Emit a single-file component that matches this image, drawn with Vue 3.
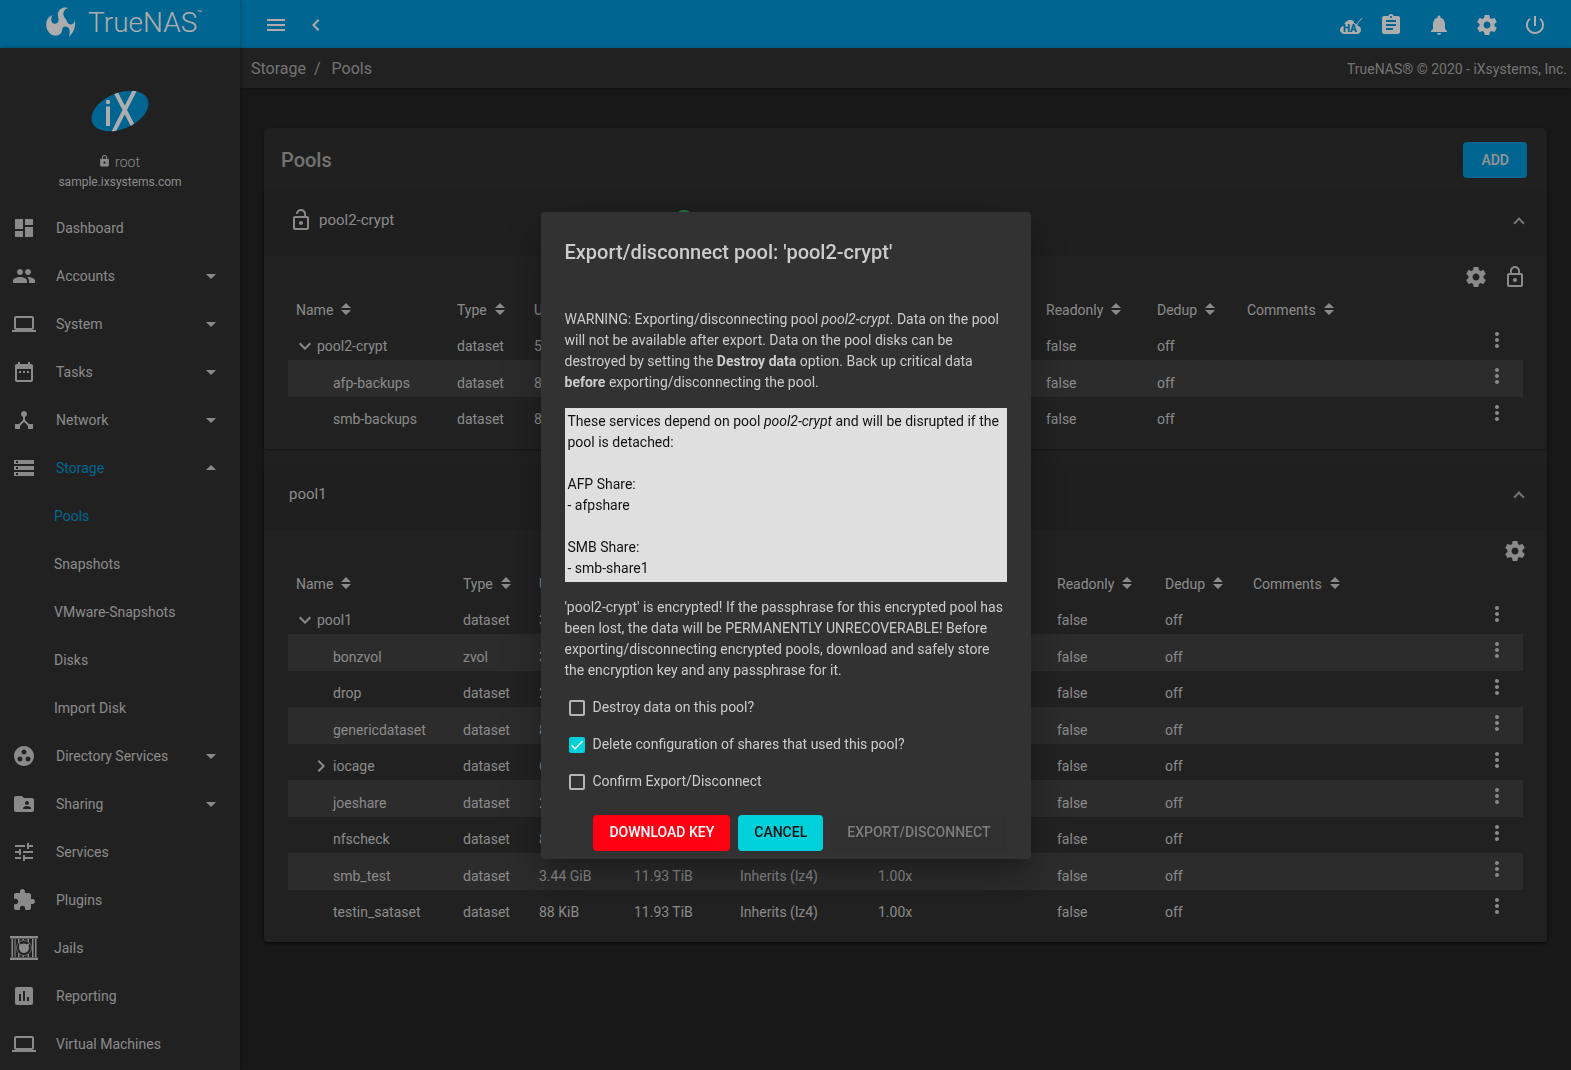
<script setup>
import { ref } from 'vue'

const icons = {
  dashboard: 'M3 13h8V3H3v10zm0 8h8v-6H3v6zm10 0h8V11h-8v10zm0-18v6h8V3h-8z',
  people: 'M16 11c1.66 0 2.99-1.34 2.99-3S17.66 5 16 5c-1.66 0-3 1.34-3 3s1.34 3 3 3zm-8 0c1.66 0 2.99-1.34 2.99-3S9.66 5 8 5C6.34 5 5 6.34 5 8s1.34 3 3 3zm0 2c-2.33 0-7 1.17-7 3.5V19h14v-2.5c0-2.33-4.67-3.5-7-3.5zm8 0c-.29 0-.62.02-.97.05 1.16.84 1.97 1.97 1.97 3.45V19h6v-2.5c0-2.33-4.67-3.5-7-3.5z',
  laptop: 'M20 18c1.1 0 1.99-.9 1.99-2L22 6c0-1.1-.9-2-2-2H4c-1.1 0-2 .9-2 2v10c0 1.1.9 2 2 2H0v2h24v-2h-4zM4 6h16v10H4V6z',
  calendar: 'M9 11H7v2h2v-2zm4 0h-2v2h2v-2zm4 0h-2v2h2v-2zm2-7h-1V2h-2v2H8V2H6v2H5c-1.11 0-1.99.9-1.99 2L3 20c0 1.1.89 2 2 2h14c1.1 0 2-.9 2-2V6c0-1.1-.9-2-2-2zm0 16H5V9h14v11z',
  hub: 'M17 16l-4-4V8.82C14.16 8.4 15 7.3 15 6c0-1.66-1.34-3-3-3S9 4.34 9 6c0 1.3.84 2.4 2 2.82V12l-4 4H3v5h5v-3.05l4-4.2 4 4.2V21h5v-5h-4z',
  storage: 'M2 20h20v-4H2v4zm2-3h2v2H4v-2zM2 4v4h20V4H2zm4 3H4V5h2v2zm-4 7h20v-4H2v4zm2-3h2v2H4v-2z',
  groupWork: 'M12 2C6.48 2 2 6.48 2 12s4.48 10 10 10 10-4.48 10-10S17.52 2 12 2zM8 17.5c-1.38 0-2.5-1.12-2.5-2.5s1.12-2.5 2.5-2.5 2.5 1.12 2.5 2.5-1.12 2.5-2.5 2.5zM9.5 8c0-1.38 1.12-2.5 2.5-2.5s2.5 1.12 2.5 2.5-1.12 2.5-2.5 2.5S9.5 9.38 9.5 8zm6.5 9.5c-1.38 0-2.5-1.12-2.5-2.5s1.12-2.5 2.5-2.5 2.5 1.12 2.5 2.5-1.12 2.5-2.5 2.5z',
  folder: 'M20 6h-8l-2-2H4c-1.1 0-1.99.9-1.99 2L2 18c0 1.1.9 2 2 2h16c1.1 0 2-.9 2-2V8c0-1.1-.9-2-2-2zm-5 3c1.1 0 2 .9 2 2s-.9 2-2 2-2-.9-2-2 .9-2 2-2zm4 8h-8v-1c0-1.33 2.67-2 4-2s4 .67 4 2v1z',
  tune: 'M3 17v2h6v-2H3zM3 5v2h10V5H3zm10 16v-2h8v-2h-8v-2h-2v6h2zM7 9v2H3v2h4v2h2V9H7zm14 4v-2H11v2h10zm-6-4h2V7h4V5h-4V3h-2v6z',
  extension: 'M20.5 11H19V7c0-1.1-.9-2-2-2h-4V3.5C13 2.12 11.88 1 10.5 1S8 2.12 8 3.5V5H4c-1.1 0-1.99.9-1.99 2v3.8H3.5c1.49 0 2.7 1.21 2.7 2.7s-1.21 2.7-2.7 2.7H2V20c0 1.1.9 2 2 2h3.8v-1.5c0-1.49 1.21-2.7 2.7-2.7 1.49 0 2.7 1.21 2.7 2.7V22H17c1.1 0 2-.9 2-2v-4h1.5c1.38 0 2.5-1.12 2.5-2.5S21.88 11 20.5 11z',
  chart: 'M19 3H5c-1.1 0-2 .9-2 2v14c0 1.1.9 2 2 2h14c1.1 0 2-.9 2-2V5c0-1.1-.9-2-2-2zM9 17H7v-7h2v7zm4 0h-2V7h2v10zm4 0h-2v-4h2v4z',
  lock: 'M18 8h-1V6c0-2.76-2.24-5-5-5S7 3.24 7 6v2H6c-1.1 0-2 .9-2 2v10c0 1.1.9 2 2 2h12c1.1 0 2-.9 2-2V10c0-1.1-.9-2-2-2zm-6 9c-1.1 0-2-.9-2-2s.9-2 2-2 2 .9 2 2-.9 2-2 2zm3.1-9H8.9V6c0-1.71 1.39-3.1 3.1-3.1 1.71 0 3.1 1.39 3.1 3.1v2z',
  lockOutline: 'M12 17c1.1 0 2-.9 2-2s-.9-2-2-2-2 .9-2 2 .9 2 2 2zm6-9h-1V6c0-2.76-2.24-5-5-5S7 3.24 7 6v2H6c-1.1 0-2 .9-2 2v10c0 1.1.9 2 2 2h12c1.1 0 2-.9 2-2V10c0-1.1-.9-2-2-2zM8.9 6c0-1.71 1.39-3.1 3.1-3.1s3.1 1.39 3.1 3.1v2H8.9V6zM18 20H6V10h12v10z',
  lockOpen: 'M12 17c1.1 0 2-.9 2-2s-.9-2-2-2-2 .9-2 2 .9 2 2 2zm6-9h-1V6c0-2.76-2.24-5-5-5S7 3.24 7 6h1.9c0-1.71 1.39-3.1 3.1-3.1 1.71 0 3.1 1.39 3.1 3.1v2H6c-1.1 0-2 .9-2 2v10c0 1.1.9 2 2 2h12c1.1 0 2-.9 2-2V10c0-1.1-.9-2-2-2zm0 12H6V10h12v10z',
  settings: 'M19.43 12.98c.04-.32.07-.64.07-.98s-.03-.66-.07-.98l2.11-1.65c.19-.15.24-.42.12-.64l-2-3.46c-.12-.22-.39-.3-.61-.22l-2.49 1c-.52-.4-1.08-.73-1.69-.98l-.38-2.65C14.46 2.18 14.25 2 14 2h-4c-.25 0-.46.18-.49.42l-.38 2.65c-.61.25-1.17.59-1.69.98l-2.49-1c-.23-.09-.49 0-.61.22l-2 3.46c-.13.22-.07.49.12.64l2.11 1.65c-.04.32-.07.65-.07.98s.03.66.07.98l-2.11 1.65c-.19.15-.24.42-.12.64l2 3.46c.12.22.39.3.61.22l2.49-1c.52.4 1.08.73 1.69.98l.38 2.65c.03.24.24.42.49.42h4c.25 0 .46-.18.49-.42l.38-2.65c.61-.25 1.17-.59 1.69-.98l2.49 1c.23.09.49 0 .61-.22l2-3.46c.12-.22.07-.49-.12-.64l-2.11-1.65zM12 15.5c-1.93 0-3.5-1.57-3.5-3.5s1.57-3.5 3.5-3.5 3.5 1.57 3.5 3.5-1.57 3.5-3.5 3.5z',
  bell: 'M12 22c1.1 0 2-.9 2-2h-4c0 1.1.89 2 2 2zm6-6v-5c0-3.07-1.64-5.64-4.5-6.32V4c0-.83-.67-1.5-1.5-1.5s-1.5.67-1.5 1.5v.68C7.63 5.36 6 7.92 6 11v5l-2 2v1h16v-1l-2-2z',
  tasks: 'M19 3h-4.18C14.4 1.84 13.3 1 12 1c-1.3 0-2.4.84-2.82 2H5c-1.1 0-2 .9-2 2v14c0 1.1.9 2 2 2h14c1.1 0 2-.9 2-2V5c0-1.1-.9-2-2-2zm-7 0c.55 0 1 .45 1 1s-.45 1-1 1-1-.45-1-1 .45-1 1-1zm2 14H7v-2h7v2zm3-4H7v-2h10v2zm0-4H7V7h10v2z',
  power: 'M13 3h-2v10h2V3zm4.83 2.17l-1.42 1.42C17.99 7.86 19 9.81 19 12c0 3.87-3.13 7-7 7s-7-3.13-7-7c0-2.19 1.01-4.14 2.58-5.42L6.17 5.17C4.23 6.82 3 9.26 3 12c0 4.97 4.03 9 9 9s9-4.03 9-9c0-2.74-1.23-5.18-3.17-6.83z',
  menu: 'M3 18h18v-2H3v2zm0-5h18v-2H3v2zm0-7v2h18V6H3z',
  chevronLeft: 'M15.41 7.41L14 6l-6 6 6 6 1.41-1.41L10.83 12z',
  chevronRight: 'M10 6L8.59 7.41 13.17 12l-4.58 4.59L10 18l6-6z',
  expandMore: 'M16.59 8.59L12 13.17 7.41 8.59 6 10l6 6 6-6z',
  dropDown: 'M7 10l5 5 5-5z',
  dropUp: 'M7 14l5-5 5 5z',
  more: 'M12 8c1.1 0 2-.9 2-2s-.9-2-2-2-2 .9-2 2 .9 2 2 2zm0 2c-1.1 0-2 .9-2 2s.9 2 2 2 2-.9 2-2-.9-2-2-2zm0 6c-1.1 0-2 .9-2 2s.9 2 2 2 2-.9 2-2-.9-2-2-2z',
  healthy: 'M12 2C6.48 2 2 6.48 2 12s4.48 10 10 10 10-4.48 10-10S17.52 2 12 2zm-2 15l-5-5 1.41-1.41L10 14.17l7.59-7.59L19 8l-9 9z'
}

const nav = [
  { label: 'Dashboard', icon: 'dashboard' },
  { label: 'Accounts', icon: 'people', arrow: 'dropDown' },
  { label: 'System', icon: 'laptop', arrow: 'dropDown' },
  { label: 'Tasks', icon: 'calendar', arrow: 'dropDown' },
  { label: 'Network', icon: 'hub', arrow: 'dropDown' },
  { label: 'Storage', icon: 'storage', arrow: 'dropUp', active: true },
  { label: 'Pools', sub: true, active: true },
  { label: 'Snapshots', sub: true },
  { label: 'VMware-Snapshots', sub: true },
  { label: 'Disks', sub: true },
  { label: 'Import Disk', sub: true },
  { label: 'Directory Services', icon: 'groupWork', arrow: 'dropDown' },
  { label: 'Sharing', icon: 'folder', arrow: 'dropDown' },
  { label: 'Services', icon: 'tune' },
  { label: 'Plugins', icon: 'extension' },
  { label: 'Jails', jail: true },
  { label: 'Reporting', icon: 'chart' },
  { label: 'Virtual Machines', icon: 'laptop' }
]

const columns = ['Name', 'Type', 'Used', 'Available', 'Compression', 'Compression Ratio', 'Readonly', 'Dedup', 'Comments']

const row = (name, used, avail, level = 1, toggle = '', type = 'dataset') => ({
  name, level, toggle,
  cells: [type, used, avail, 'Inherits (lz4)', '1.00x', 'false', 'off', '']
})

const pools = [
  {
    name: 'pool2-crypt',
    encrypted: true,
    tools: ['settings', 'lockOutline'],
    widths: [161, 77, 95, 106, 138, 173, 111, 90],
    rows: [
      row('pool2-crypt', '528 KiB', '3.51 TiB', 0, 'expandMore'),
      row('afp-backups', '88 KiB', '3.51 TiB'),
      row('smb-backups', '88 KiB', '3.51 TiB')
    ]
  },
  {
    name: 'pool1',
    encrypted: false,
    tools: ['settings'],
    widths: [167, 76, 95, 106, 138, 179, 108, 88],
    rows: [
      row('pool1', '33.1 GiB', '11.93 TiB', 0, 'expandMore'),
      row('bonzvol', '3.1 GiB', '11.93 TiB', 1, '', 'zvol'),
      row('drop', '2.1 GiB', '11.93 TiB'),
      row('genericdataset', '88 KiB', '11.93 TiB'),
      row('iocage', '6.1 GiB', '11.93 TiB', 1, 'chevronRight'),
      row('joeshare', '2.1 GiB', '11.93 TiB'),
      row('nfscheck', '88 KiB', '11.93 TiB'),
      row('smb_test', '3.44 GiB', '11.93 TiB'),
      row('testin_sataset', '88 KiB', '11.93 TiB')
    ]
  }
]

const options = ref([
  { id: 'destroy', label: 'Destroy data on this pool?', checked: false },
  { id: 'cascade', label: 'Delete configuration of shares that used this pool?', checked: true },
  { id: 'confirm', label: 'Confirm Export/Disconnect', checked: false }
])
</script>

<template>
  <div class="page">
    <header class="topbar">
      <div class="brand">
        <svg class="brand-mark" viewBox="0 0 30 30" aria-hidden="true">
          <path d="M22.500 1C19 -.5 13.500 .8 11.900 6C11.100 9 13.400 11.500 12.300 14.500C11.200 17 7.800 17.600 6.200 15.500C4.700 13.500 5 10.800 6.500 8C2 10.500 0 15 .3 19.500C1.300 25 5 28.600 9.500 28.600C14 28.600 15.800 26 16.200 22.500C16.600 19.800 19.300 18.700 21.700 20.200C24.200 21.900 24.300 25 22.800 29.800C27.500 25.500 30 20 28.900 13C28.500 15.800 27 17.500 24.700 17.500C21.500 17.500 21.300 14.500 19.800 12.300C18.400 10.200 16.600 8.300 17.600 5C18.400 2.700 20 1.500 22.500 1Z" />
          <path d="M4.800 8C1.500 10.500 0 14 .1 17.500C1 13.500 2.500 10.500 4.800 8Z" />
        </svg>
        <span class="brand-name">TrueNAS</span><span class="brand-tm">™</span>
      </div>
      <div class="bar">
        <button class="icon-btn" aria-label="Toggle menu"><svg class="icon" viewBox="0 0 24 24"><path :d="icons.menu" /></svg></button>
        <button class="icon-btn back" aria-label="Collapse menu"><svg class="icon" viewBox="0 0 24 24"><path :d="icons.chevronLeft" /></svg></button>
        <span class="spacer"></span>
        <button class="icon-btn ha" aria-label="High availability">
          <svg class="icon" viewBox="0 0 24 24">
            <path d="M6 21C3 21 1 19.300 1 17C1 14.800 2.600 13.200 5 12.800C5.300 9.500 8 7 11.300 7C12.800 7 14 7.500 15 8.300L14 9.300L17 12.400L18.200 11.300C18.600 11.900 18.900 12.500 19 13C21 13.300 22 15 22 17C22 19.300 20.300 21 18 21Z" />
            <path class="tick" d="M14 9.300L17 12L23 5" />
            <text x="4" y="19">HA</text>
          </svg>
        </button>
        <button class="icon-btn" aria-label="Task manager"><svg class="icon" viewBox="0 0 24 24"><path :d="icons.tasks" /></svg></button>
        <button class="icon-btn" aria-label="Alerts"><svg class="icon" viewBox="0 0 24 24"><path :d="icons.bell" /></svg></button>
        <button class="icon-btn" aria-label="Settings"><svg class="icon" viewBox="0 0 24 24"><path :d="icons.settings" /></svg></button>
        <button class="icon-btn" aria-label="Power"><svg class="icon" viewBox="0 0 24 24"><path :d="icons.power" /></svg></button>
      </div>
    </header>

    <div class="body">
      <aside class="sidebar">
        <div class="profile">
          <svg class="ix-logo" viewBox="0 0 58 42" aria-hidden="true">
            <defs>
              <clipPath id="ix-clip"><ellipse cx="29" cy="21" rx="30" ry="18" transform="rotate(-23 29 21)" /></clipPath>
            </defs>
            <ellipse class="disc" cx="29" cy="21" rx="30" ry="18" transform="rotate(-23 29 21)" />
            <g clip-path="url(#ix-clip)">
              <path class="stroke" d="M24 1L42 36M45 -2L22 43M17 16.500V36" />
              <circle class="dot" cx="17" cy="12" r="2.200" />
            </g>
          </svg>
          <div class="user">
            <svg class="user-lock" viewBox="0 0 24 24"><path :d="icons.lock" /></svg>
            <span>root</span>
          </div>
          <div class="host">sample.ixsystems.com</div>
        </div>
        <nav>
          <a v-for="item in nav" :key="item.label" href="#" class="nav-item" :class="{ sub: item.sub, active: item.active, jail: item.jail }">
            <svg v-if="item.icon" class="icon" viewBox="0 0 24 24"><path :d="icons[item.icon]" /></svg>
            <svg v-if="item.jail" class="jail-icon" viewBox="0 0 28 24">
              <path d="M0 0h28v2.500H0zM0 21.500h28V24H0zM1.500 3h1.500v18H1.500zM4.500 3h1v18h-1zM8 3h1.500v18H8zM12.500 3h1.500v18h-1.500zM17.500 3H19v18h-1.500zM22 3h1.500v18H22zM25 3h1.500v18H25z" />
              <circle class="jail-ring" cx="14" cy="12" r="7.500" />
              <path d="M9.500 8.500C8 12 9.500 17 14 17C18 17 20 13 18.500 9.500L20 7L16.500 8.300C15 7.200 12.800 7.200 11.500 8.200L8.500 7Z" />
            </svg>
            <span class="nav-label">{{ item.label }}</span>
            <svg v-if="item.arrow" class="icon" viewBox="0 0 24 24"><path :d="icons[item.arrow]" /></svg>
          </a>
        </nav>
      </aside>

      <main class="main">
        <div class="crumbs">
          <div class="trail"><a href="#">Storage</a><span class="slash">/</span><a href="#">Pools</a></div>
          <div>TrueNAS® © 2020 - iXsystems, Inc.</div>
        </div>

        <section class="card">
          <div class="card-head">
            <h1>Pools</h1>
            <button class="add">ADD</button>
          </div>

          <article v-for="pool in pools" :key="pool.name" class="pool">
            <div class="pool-head">
              <div class="pool-name">
                <svg v-if="pool.encrypted" class="icon" viewBox="0 0 24 24"><path :d="icons.lockOpen" /></svg>
                <span>{{ pool.name }}</span>
              </div>
              <svg class="icon health" viewBox="0 0 24 24"><path :d="icons.healthy" /></svg>
              <button class="collapse" aria-label="Collapse"><span class="caret"></span></button>
            </div>
            <div class="pool-body">
              <div class="tools">
                <button v-for="tool in pool.tools" :key="tool" class="tool" :aria-label="tool">
                  <svg class="icon" viewBox="0 0 24 24"><path :d="icons[tool]" /></svg>
                </button>
              </div>
              <table>
                <colgroup>
                  <col v-for="(w, i) in pool.widths" :key="i" :style="{ width: w + 'px' }" />
                  <col />
                  <col class="menu-col" />
                </colgroup>
                <thead>
                  <tr>
                    <th v-for="c in columns" :key="c" scope="col">
                      {{ c }}<svg class="sort" viewBox="0 0 10 12"><path d="M5 0l5 5H0zM0 7h10l-5 5z" /></svg>
                    </th>
                    <td></td>
                  </tr>
                </thead>
                <tbody>
                  <tr v-for="r in pool.rows" :key="r.name">
                    <td>
                      <div class="name" :class="{ child: r.level }">
                        <span class="toggle"><svg v-if="r.toggle" class="icon" viewBox="0 0 24 24"><path :d="icons[r.toggle]" /></svg></span>
                        <span>{{ r.name }}</span>
                      </div>
                    </td>
                    <td v-for="(cell, i) in r.cells" :key="i">{{ cell }}</td>
                    <td class="menu-cell">
                      <button class="more" aria-label="Options"><svg class="icon" viewBox="0 0 24 24"><path :d="icons.more" /></svg></button>
                    </td>
                  </tr>
                </tbody>
              </table>
            </div>
          </article>
        </section>
      </main>
    </div>

    <div class="backdrop">
      <div class="dialog" role="dialog" aria-modal="true" aria-labelledby="dialog-title">
        <h2 id="dialog-title">Export/disconnect pool: 'pool2-crypt'</h2>
        <p>
          WARNING: Exporting/disconnecting pool <i>pool2-crypt</i>. Data on the pool will not be available after export.
          Data on the pool disks can be destroyed by setting the <b>Destroy data</b> option. Back up critical data
          <b>before</b> exporting/disconnecting the pool.
        </p>
        <div class="services">
          These services depend on pool <i>pool2-crypt</i> and will be disrupted if the pool is detached:<br /><br />
          AFP Share:<br />- afpshare<br /><br />
          SMB Share:<br />- smb-share1
        </div>
        <p>
          'pool2-crypt' is encrypted! If the passphrase for this encrypted pool has been lost, the data will be
          PERMANENTLY UNRECOVERABLE! Before exporting/disconnecting encrypted pools, download and safely store the
          encryption key and any passphrase for it.
        </p>
        <div class="options">
          <label v-for="o in options" :key="o.id" class="option" :for="o.id">
            <span class="box">
              <input :id="o.id" v-model="o.checked" type="checkbox" />
              <svg v-if="o.checked" class="check" viewBox="0 0 24 24"><path d="M4.100 12.700L9 17.600L20.300 6.300" /></svg>
            </span>
            <span>{{ o.label }}</span>
          </label>
        </div>
        <div class="actions">
          <button class="btn danger">DOWNLOAD KEY</button>
          <button class="btn primary">CANCEL</button>
          <button class="btn" disabled>EXPORT/DISCONNECT</button>
        </div>
      </div>
    </div>
  </div>
</template>

<style>
body {
  margin: 0;
  background: #242424;
}
</style>

<style scoped>
.page {
  min-height: 100vh;
  display: flex;
  flex-direction: column;
  font: 14px/20px Roboto, "Noto Sans", sans-serif;
  color: #ccc;
  background: #242424;
}
.page * {
  box-sizing: border-box;
}
button {
  font: inherit;
  color: inherit;
  border: 0;
  padding: 0;
  background: none;
  cursor: pointer;
}
a {
  color: inherit;
  text-decoration: none;
}
.icon {
  width: 24px;
  height: 24px;
  fill: currentColor;
  display: block;
  flex: none;
}

/* top bar */
.topbar {
  display: flex;
  height: 48px;
  background: #0095d5;
  color: #fff;
}
.brand {
  width: 240px;
  flex: none;
  padding-left: 46px;
  display: flex;
  align-items: center;
  box-shadow: 1px 0 4px rgba(0, 0, 0, 0.25);
}
.brand-mark {
  width: 30px;
  height: 30px;
  fill: #fff;
  margin: 0 12px 4px 0;
}
.brand-name {
  font: 300 28px/44px Roboto, sans-serif;
  padding-bottom: 2px;
}
.brand-tm {
  font-size: 8px;
  line-height: 8px;
  align-self: flex-start;
  margin-top: 10px;
}
.bar {
  flex: 1;
  display: flex;
  align-items: center;
  padding: 2px 12px 0 12px;
}
.icon-btn {
  width: 48px;
  height: 48px;
  display: flex;
  align-items: center;
  justify-content: center;
}
.back,
.ha {
  width: 32px;
}
.spacer {
  flex: 1;
}
.ha .tick {
  fill: none;
  stroke: #fff;
  stroke-width: 1;
}
.ha text {
  font: 900 10px Roboto, sans-serif;
  fill: #0095d5;
}

/* sidebar */
.body {
  flex: 1;
  display: flex;
}
.sidebar {
  width: 240px;
  flex: none;
  background: #323232;
  box-shadow: 1px 0 4px rgba(0, 0, 0, 0.35);
  z-index: 1;
}
.profile {
  height: 156px;
  padding-top: 42px;
  display: flex;
  flex-direction: column;
  align-items: center;
}
.ix-logo {
  width: 58px;
  height: 42px;
  margin-bottom: 20px;
}
.ix-logo .disc {
  fill: #0095d5;
}
.ix-logo .stroke {
  fill: none;
  stroke: #fff;
  stroke-width: 4;
}
.ix-logo .dot {
  fill: #fff;
}
.user {
  display: flex;
  align-items: center;
  gap: 4px;
  font-weight: 300;
  padding-right: 2px;
}
.user-lock {
  width: 13px;
  height: 14px;
  margin-bottom: 3px;
  fill: #ccc;
}
.host {
  font-size: 12px;
}
.nav-item {
  height: 48px;
  padding: 0 17px 0 12px;
  display: flex;
  align-items: center;
}
.nav-label {
  flex: 1;
  margin-left: 20px;
}
.sub .nav-label {
  margin-left: 42px;
}
.jail {
  padding-left: 10px;
}
.jail .nav-label {
  margin-left: 16px;
}
.active .nav-label {
  color: #0095d5;
}
.jail-icon {
  width: 28px;
  height: 24px;
  fill: currentColor;
}
.jail-ring {
  fill: #323232;
  stroke: #999;
}

/* main column */
.main {
  flex: 1;
  min-width: 0;
}
.crumbs {
  height: 40px;
  padding: 1px 4px 0 11px;
  display: flex;
  align-items: center;
  justify-content: space-between;
  background: #323232;
  color: #aaa;
  box-shadow: 0 1px 4px rgba(0, 0, 0, 0.3);
}
.trail {
  font-size: 16px;
}
.slash {
  margin: 0 11px 0 8px;
}
.card {
  margin: 40px 24px 24px;
  background: #303030;
  border-radius: 6px;
  box-shadow: 0 2px 4px rgba(0, 0, 0, 0.4);
}
.card-head {
  height: 64px;
  padding: 0 20px 0 17px;
  display: flex;
  align-items: center;
  justify-content: space-between;
}
h1 {
  margin: 0;
  font-size: 20px;
  font-weight: 500;
  color: #aaa;
}
.add {
  height: 36px;
  padding: 0 18px;
  border-radius: 4px;
  background: #0095d5;
  color: #ddd;
  font-weight: 500;
}
.pool {
  background: #323232;
  border-radius: 4px;
  box-shadow: 0 1px 3px rgba(0, 0, 0, 0.4);
}
.pool + .pool {
  margin-top: 17px;
}
.pool-head {
  height: 64px;
  padding: 0 20px 8px 25px;
  display: flex;
  align-items: center;
  background: #2e2e2e;
}
.pool-name {
  width: 383px;
  display: flex;
  align-items: center;
  gap: 6px;
  font-size: 15px;
}
.health {
  color: #2db35a;
}
.collapse {
  width: 16px;
  height: 16px;
  margin-left: auto;
  display: flex;
  align-items: center;
  justify-content: center;
}
.caret {
  width: 8px;
  height: 8px;
  margin-top: 6px;
  border: solid #aaa;
  border-width: 2px 0 0 2px;
  transform: rotate(45deg);
}
.pool-body {
  padding: 0 24px 16px;
}
.tools {
  height: 36px;
  padding-top: 9px;
  display: flex;
  justify-content: flex-end;
  gap: 15px;
  margin-right: -4px;
}
.tool {
  height: 24px;
}
table {
  width: 100%;
  table-layout: fixed;
  border-collapse: collapse;
}
.menu-col {
  width: 60px;
}
th {
  height: 32px;
  padding: 4px 0 0 8px;
  text-align: left;
  font-weight: 400;
  white-space: nowrap;
}
.sort {
  width: 10px;
  height: 12px;
  margin-left: 8px;
  fill: currentColor;
}
tbody td {
  height: 36px;
  padding: 12px 0 4px 8px;
  vertical-align: top;
}
tbody tr:nth-child(even) {
  background: #414141;
}
tbody tr:nth-child(even) td {
  height: 37px;
  padding-top: 13px;
}
tbody td:first-child {
  padding-left: 5px;
}
tbody tr .menu-cell,
tbody tr:nth-child(even) .menu-cell {
  padding: 4px 14px 0 0;
}
.more {
  display: block;
  margin-left: auto;
}
.name {
  height: 20px;
  display: flex;
  align-items: center;
}
.child {
  padding-left: 16px;
}
.toggle {
  width: 24px;
}

/* dialog */
.backdrop {
  position: fixed;
  inset: 0;
  z-index: 10;
  display: flex;
  align-items: center;
  justify-content: center;
  background: rgba(0, 0, 0, 0.32);
}
.dialog {
  width: 490px;
  padding: 24px 24px 8px;
  border-radius: 4px;
  background: #323232;
  line-height: 21px;
  box-shadow: 0 11px 15px -7px rgba(0, 0, 0, 0.2), 0 24px 38px 3px rgba(0, 0, 0, 0.14), 0 9px 46px 8px rgba(0, 0, 0, 0.12);
}
h2 {
  margin: 0 0 41px;
  font-size: 20px;
  font-weight: 500;
  line-height: 32px;
}
p {
  margin: 0;
}
.services {
  margin: 15px 0;
  padding: 3px;
  background: #dfdfdf;
  color: #111;
}
.options {
  margin: 8px 0 15px;
}
.option {
  height: 37px;
  padding-left: 4px;
  display: flex;
  align-items: center;
  gap: 8px;
}
.box {
  position: relative;
  width: 16px;
  height: 16px;
  margin-top: 2px;
}
.box input {
  appearance: none;
  display: block;
  width: 16px;
  height: 16px;
  margin: 0;
  border: 2px solid #b5b5b5;
  border-radius: 2px;
}
.box input:checked {
  border-color: #00d0d9;
  background: #00d0d9;
}
.check {
  position: absolute;
  inset: 0;
  fill: none;
  stroke: #fff;
  stroke-width: 2;
  pointer-events: none;
}
.actions {
  display: flex;
  justify-content: flex-end;
  gap: 8px;
}
.btn {
  height: 36px;
  padding: 0 16px;
  border-radius: 4px;
  font-weight: 500;
}
.danger {
  background: #ff0013;
  color: #fff;
}
.primary {
  background: #00d0d9;
  color: #111;
}
.btn:disabled {
  background: #303030;
  color: #7d7d7d;
}
</style>
